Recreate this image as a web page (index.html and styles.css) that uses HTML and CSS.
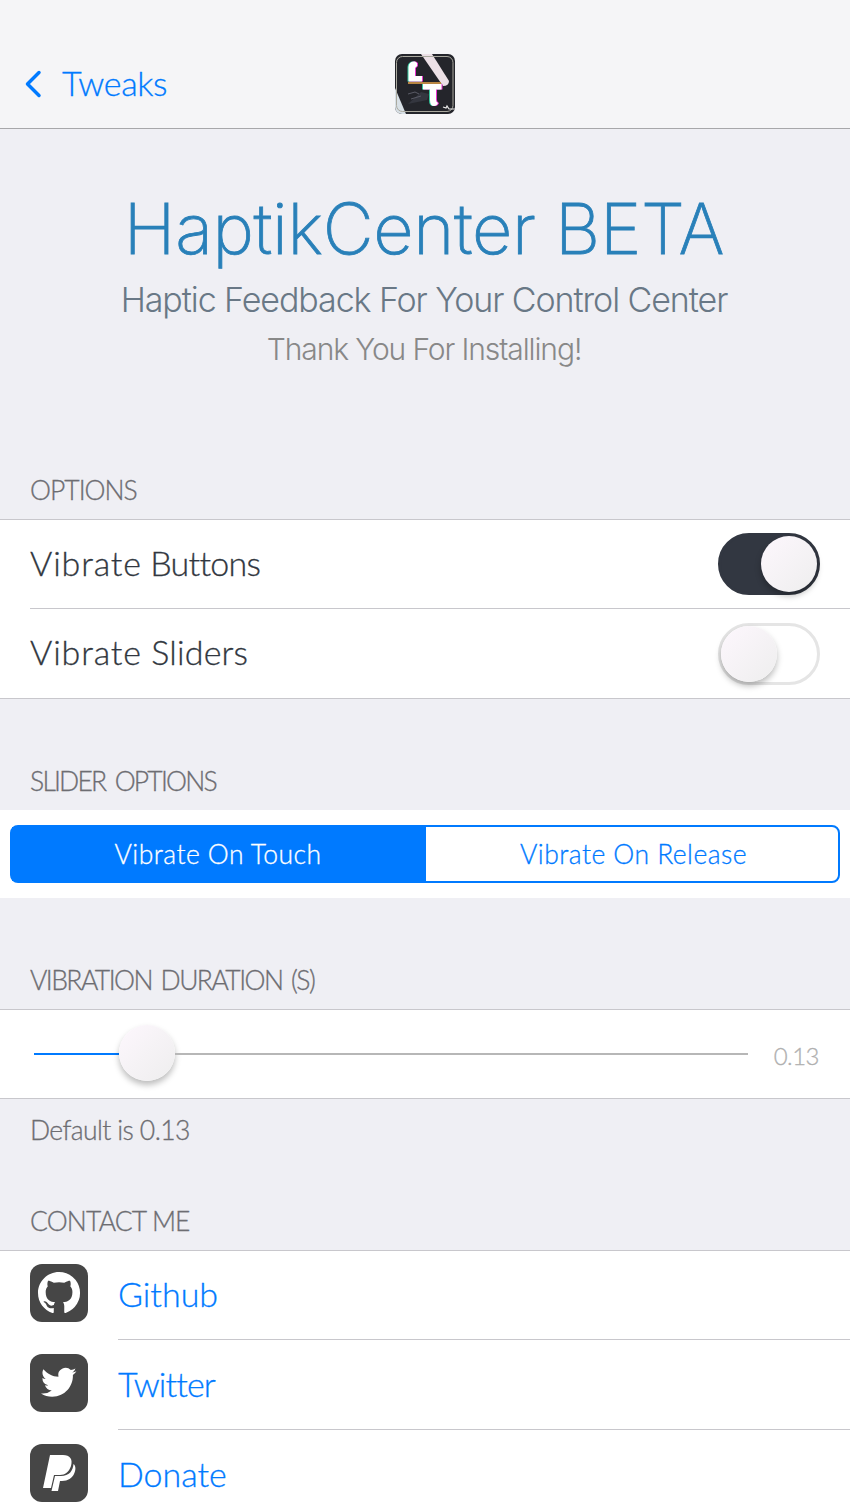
FILE: index.html
```html
<!DOCTYPE html>
<html lang="en">
<head>
<meta charset="utf-8">
<title>HaptikCenter</title>
<link rel="stylesheet" href="styles.css">
</head>
<body>
<header class="navbar">
  <a class="back"><svg class="chevron" width="18" height="28" viewBox="0 0 18 28"><path d="M15 2.500L3.500 14 15 25.500"/></svg><span class="back-label">Tweaks</span></a>
  <svg class="app-icon" width="60" height="60" viewBox="0 0 60 60">
    <defs>
      <clipPath id="app-clip"><rect width="60" height="60" rx="7"/></clipPath>
      <g id="monogram"><path d="M13.500 27.500V13Q14 7 20 7.500L22 9V12L20 14V22H27V27.500Z"/><path d="M28 30H46.500V35.500H41V46Q41 48 43 49Q42 52 39 52Q35 52 35 46V35.500H28Z"/></g>
    </defs>
    <g clip-path="url(#app-clip)">
      <rect width="60" height="60" fill="#24252b"/>
      <path d="M0 34L11 60H0Z" fill="#d8e0e6"/>
      <path d="M13 50L26 38 34 40 32 46Z" fill="#34363f"/>
      <path d="M13 40l7-2 4 2M16 45l10-3" fill="none" stroke="#5a5b66" stroke-width="1"/>
      <path d="M26 0H37L54 27Q54 32 48 32Z" fill="#ece0e6"/>
      <rect x="1.500" y="2.500" width="56.500" height="55" rx="6" fill="none" stroke="#aaa99f" stroke-width="1"/>
      <path d="M13 29H46" stroke="#b98643" stroke-width="2"/>
      <use href="#monogram" x="-1" fill="#37c9a0"/>
      <use href="#monogram" x="1" fill="#e936d0"/>
      <use href="#monogram" fill="#fff"/>
      <path d="M48 53l3 1 1-2 2 3h6" fill="none" stroke="#e8e8e8" stroke-width="1.200"/>
    </g>
  </svg>
</header>
<main>
  <section class="hero">
    <h1 class="title">HaptikCenter BETA</h1>
    <p class="subtitle">Haptic Feedback For Your Control Center</p>
    <p class="thanks">Thank You For Installing!</p>
  </section>
  <h2 class="group-label options">OPTIONS</h2>
  <section class="group">
    <label class="row"><span class="row-label buttons-label"><span class="verb">Vibrate</span> Buttons</span><span class="switch on"><i class="knob"></i></span></label>
    <label class="row second"><span class="row-label sliders-label"><span class="verb">Vibrate</span> Sliders</span><span class="switch"><i class="knob"></i></span></label>
  </section>
  <h2 class="group-label slider-options">SLIDER OPTIONS</h2>
  <section class="segment-cell">
    <div class="segments"><span class="segment selected">Vibrate On Touch</span><span class="segment">Vibrate On Release</span></div>
  </section>
  <h2 class="group-label duration">VIBRATION DURATION (S)</h2>
  <section class="group slider-row">
    <div class="slider"><i class="fill"></i><i class="knob"></i><i class="track"></i></div>
    <span class="value">0.13</span>
  </section>
  <p class="note">Default is 0.13</p>
  <h2 class="group-label contact">CONTACT ME</h2>
  <section class="links">
    <a class="link"><svg class="icon" width="58" height="58" viewBox="0 0 58 58"><rect width="58" height="58" rx="12" fill="#464646"/><g transform="translate(8 8) scale(2.625)"><path fill="#fff" d="M8 0C3.580 0 0 3.580 0 8c0 3.540 2.290 6.530 5.470 7.590.4.070.55-.17.55-.38 0-.19-.01-.82-.01-1.490-2.010.37-2.530-.49-2.690-.94-.09-.23-.48-.94-.82-1.130-.28-.15-.68-.52-.01-.53.63-.01 1.080.58 1.230.82.72 1.210 1.870.87 2.330.66.07-.52.28-.87.51-1.070-1.780-.2-3.640-.89-3.640-3.950 0-.87.31-1.590.82-2.150-.08-.2-.36-1.020.08-2.120 0 0 .67-.21 2.200.82a7.600 7.600 0 0 1 4 0c1.530-1.040 2.200-.82 2.200-.82.44 1.100.16 1.920.08 2.120.51.56.82 1.270.82 2.150 0 3.070-1.870 3.750-3.650 3.950.29.25.54.73.54 1.480 0 1.070-.01 1.930-.01 2.200 0 .21.15.46.55.38A8 8 0 0 0 8 0Z"/></g></svg><span class="link-label github">Github</span></a>
    <a class="link"><svg class="icon" width="58" height="58" viewBox="0 0 58 58"><rect width="58" height="58" rx="12" fill="#464646"/><path transform="translate(11 10.500) scale(1.480)" fill="#fff" d="M23.950 4.570a10 10 0 0 1-2.820.77 4.960 4.960 0 0 0 2.160-2.720c-.95.550-2 .95-3.130 1.180a4.920 4.920 0 0 0-8.380 4.480C7.690 8.090 4.070 6.130 1.640 3.160a4.820 4.820 0 0 0-.67 2.480c0 1.710.87 3.210 2.190 4.100a4.900 4.900 0 0 1-2.230-.62v.06a4.920 4.920 0 0 0 3.950 4.830 5 5 0 0 1-2.210.08 4.940 4.940 0 0 0 4.600 3.420A9.870 9.870 0 0 1 0 19.540a14 14 0 0 0 7.560 2.210c9.050 0 14-7.500 14-13.980 0-.21 0-.42-.02-.63a9.940 9.940 0 0 0 2.410-2.570Z"/></svg><span class="link-label twitter">Twitter</span></a>
    <a class="link"><svg class="icon" width="58" height="58" viewBox="0 0 58 58"><rect width="58" height="58" rx="12" fill="#464646"/><path fill="#fff" d="M20 11H33C40 11 43 15 41 22C39 28 35 31 30 31H24L21 44H13Z"/><path fill="#fff" d="M43.500 20C46 22 46 26 44 30C42 34 38 37 32 37H30L28 47H21.500L25 32H31C39 32 43 27 43.500 20Z"/></svg><span class="link-label donate">Donate</span></a>
  </section>
</main>
</body>
</html>
```
FILE: styles.css
```css
* { box-sizing: border-box; }
body { margin: 0; width: 850px; height: 1511px; overflow: hidden; background: #efeff4; color: #313740; font: 300 34px/40px Lato, sans-serif; font-variant-ligatures: none; -webkit-text-stroke: .3px currentColor; }
h1, h2, p { margin: 0; font-weight: 300; }
.navbar { height: 129px; padding: 54px 24px 0; display: grid; grid-template-columns: 1fr 60px 1fr; background: #f5f5f7; border-bottom: 1px solid #a7a7aa; }
.back { display: flex; align-items: center; gap: 20px; height: 60px; color: #007aff; }
.back-label { letter-spacing: -.35px; padding-bottom: 2px; }
.chevron { fill: none; stroke: #007aff; stroke-width: 3.500; stroke-linecap: round; stroke-linejoin: round; }
.app-icon { display: block; }
.hero { height: 335px; padding: 58px 2px 0 0; text-align: center; font-family: Inter, sans-serif; -webkit-text-stroke: 0; }
.title { font-size: 70px; line-height: 84px; font-weight: 200; letter-spacing: -.3px; color: #2980b9; -webkit-text-stroke: .8px #2980b9; }
.subtitle { font-size: 34px; line-height: 58px; color: #697886; letter-spacing: -1.080px; }
.thanks { font-size: 30px; line-height: 40px; color: #888; letter-spacing: -1.100px; }
.group-label { height: 55px; padding: 6px 30px 0; font-size: 26.500px; line-height: 40px; color: #6d6d72; }
.options { letter-spacing: -1px; }
.group { background: #fff; border-top: 1px solid #c8c7cc; border-bottom: 1px solid #c8c7cc; }
.row { display: flex; align-items: center; justify-content: space-between; height: 88px; padding: 0 30px; }
.second { height: 90px; border-top: 1px solid #c8c7cc; margin-left: 30px; padding-left: 0; }
.row-label { padding-bottom: 3px; }
.verb { letter-spacing: .85px; }
.buttons-label { letter-spacing: -.75px; }
.sliders-label { letter-spacing: .2px; }
.switch { width: 102px; height: 62px; border: 3px solid #e5e5e5; border-radius: 31px; display: flex; }
.on { background: #323741; border-color: #323741; justify-content: flex-end; }
.knob { width: 56px; height: 56px; border-radius: 50%; background: linear-gradient(135deg, #fdf7fd, #eee); box-shadow: 0 4px 6px #0004; flex: none; }
.slider-options { height: 111px; padding-top: 62px; letter-spacing: -1.800px; word-spacing: 4px; }
.segment-cell { height: 88px; padding: 15px 10px; background: #fff; }
.segments { display: grid; grid-template-columns: 414px 1fr; height: 58px; border: 2px solid #007aff; border-radius: 8px; color: #007aff; font-size: 26.500px; letter-spacing: .45px; }
.segment { display: flex; align-items: center; justify-content: center; }
.selected { background: #007aff; color: #fff; padding-right: 2px; }
.segment + .segment { padding-left: 3px; }
.duration { height: 111px; padding-top: 62px; letter-spacing: -1.550px; word-spacing: 3px; }
.slider-row { display: flex; align-items: center; height: 90px; padding: 0 31px 0 34px; justify-content: space-between; }
.slider { width: 714px; display: flex; align-items: center; }
.slider .knob { margin-bottom: 2px; }
.fill { width: 85px; height: 2px; background: #007aff; }
.track { flex: 1; height: 2px; background: #b7b7b7; }
.value { font-size: 24px; color: #b0b0b0; letter-spacing: -.5px; padding-top: 4px; }
.note { height: 96px; padding: 11px 30px; color: #6d6d72; font-size: 26.500px; letter-spacing: -.6px; }
.contact { letter-spacing: -.85px; }
.links { background: #fff; border-top: 1px solid #c8c7cc; height: 261px; }
.link { display: flex; height: 90px; padding-left: 30px; gap: 30px; color: #007aff; }
.icon { margin-top: 13px; }
.link-label { flex: 1; height: 89px; line-height: 86px; border-bottom: 1px solid #c8c7cc; }
.twitter { letter-spacing: -.9px; }
```
